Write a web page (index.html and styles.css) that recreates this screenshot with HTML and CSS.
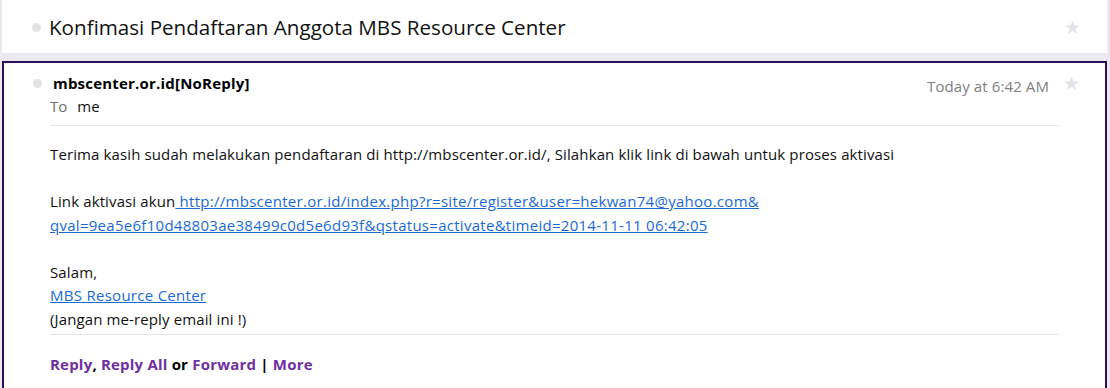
FILE: index.html
```html
<!DOCTYPE html>
<html>
<head>
<meta charset="utf-8">
<link rel="stylesheet" href="styles.css">
</head>
<body>
<div class="page">
  <div class="subject">
    <span class="dot subject-dot"></span>
    <h1 class="subject-title">Konfimasi Pendaftaran Anggota MBS Resource Center</h1>
    <span class="star subject-star">★</span>
  </div>
  <div class="message">
    <div class="msg-head">
      <div class="gutter"><span class="dot head-dot"></span></div>
      <div class="head-main">
        <div class="name-row">
          <span class="sender">mbscenter.or.id[NoReply]</span>
          <span class="time">Today at 6:42 AM</span>
        </div>
        <div class="to-row"><span class="to-label">To</span><span class="to-name">me</span></div>
      </div>
      <div class="right-gutter"><span class="star">★</span></div>
    </div>
    <div class="msg-body">
      <p class="line">Terima kasih sudah melakukan pendaftaran di http://mbscenter.or.id/, Silahkan klik link di bawah untuk proses aktivasi</p>
      <p class="para">Link aktivasi akun<a href="#" class="link"> http://mbscenter.or.id/index.php?r=site/register&amp;user=hekwan74@yahoo.com&amp;<br>qval=9ea5e6f10d48803ae38499c0d5e6d93f&amp;qstatus=activate&amp;timeid=2014-11-11 06:42:05</a></p>
      <p class="para">Salam,<br><a href="#" class="link">MBS Resource Center</a><br>(Jangan me-reply email ini !)</p>
    </div>
    <div class="actions">
      <a href="#" class="act">Reply</a>, <a href="#" class="act">Reply All</a> or <a href="#" class="act">Forward</a> | <a href="#" class="act">More</a>
    </div>
  </div>
</div>
</body>
</html>
```

FILE: styles.css
```css
html, body {
  margin: 0;
  padding: 0;
}
body {
  background: #ece8f1;
  font-family: "Open Sans", "Noto Sans", sans-serif;
  color: #111;
  width: 1110px;
  height: 388px;
  overflow: hidden;
}
.page {
  padding: 0 3px 0 2px;
}
.subject {
  background: #fff;
  height: 53px;
  display: flex;
  align-items: center;
  padding-left: 30px;
  padding-right: 26px;
}
.dot {
  display: block;
  width: 9px;
  height: 9px;
  border-radius: 50%;
  background: #e2e2e2;
  flex: none;
}
.subject-dot {
  margin-right: 8px;
  margin-top: 2px;
}
.subject-title {
  margin: 0;
  font-weight: normal;
  font-size: 20.6px;
  color: #111;
  flex: 1;
}
.star {
  display: block;
  color: #e4e3e9;
  font-family: "DejaVu Sans", sans-serif;
  font-size: 19px;
  line-height: 1;
}
.subject-star {
  margin-top: 2px;
}
.message {
  margin-top: 8px;
  background: #fff;
  border: 2px solid #2d0c59;
  border-bottom: none;
  height: 325px;
  overflow: hidden;
}
.msg-head {
  display: flex;
  padding-top: 10px;
}
.gutter {
  width: 46px;
  flex: none;
  padding-left: 29px;
  padding-top: 6px;
  box-sizing: border-box;
}
.head-main {
  flex: 1;
  border-bottom: 1px solid #e6e6e6;
  padding-bottom: 9px;
}
.name-row {
  display: flex;
  justify-content: space-between;
  align-items: flex-start;
  padding-right: 11px;
  height: 20px;
}
.sender {
  font-weight: bold;
  font-size: 15px;
  line-height: 20px;
  margin-left: 3px;
  color: #000;
  letter-spacing: 0.2px;
}
.time {
  font-size: 15px;
  line-height: 20px;
  color: #808080;
  margin-top: 3px;
  letter-spacing: 0.1px;
}
.to-row {
  font-size: 15px;
  line-height: 20px;
  margin-top: 3px;
}
.to-label {
  color: #707070;
  margin-right: 10px;
}
.to-name {
  color: #111;
}
.right-gutter {
  width: 45px;
  flex: none;
  padding-left: 3px;
  padding-top: 1px;
  box-sizing: border-box;
}
.msg-body {
  margin: 0 45px 0 46px;
  padding: 17px 0 3px;
  border-bottom: 1px solid #e6e6e6;
  font-size: 15px;
  line-height: 23.5px;
  letter-spacing: 0.12px;
}
.msg-body p {
  margin: 0;
}
.para {
  margin-top: 23.5px !important;
}
.link {
  color: #1a6ad6;
  text-decoration: underline;
  letter-spacing: 0.28px;
}
.actions {
  margin: 0 45px 0 46px;
  padding-top: 19px;
  font-size: 15px;
  font-weight: bold;
  color: #000;
  letter-spacing: 0.2px;
}
.act {
  color: #7030a0;
  text-decoration: none;
}
```
